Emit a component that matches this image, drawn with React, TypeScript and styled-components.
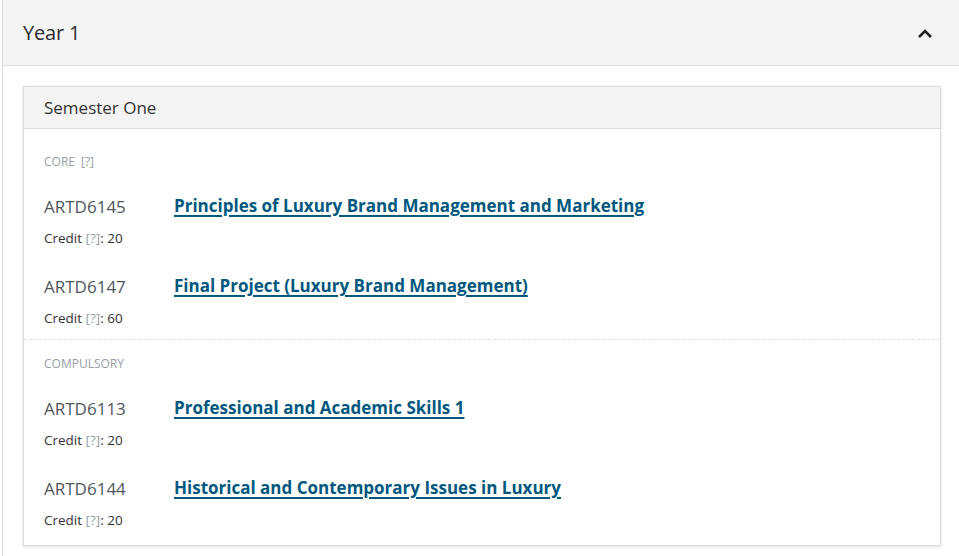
import React from "react";
import styled, { createGlobalStyle } from "styled-components";

const Global = createGlobalStyle`
  html, body { margin: 0; padding: 0; background: #fff; }
  body { font-family: "Open Sans", "Noto Sans", sans-serif; color: #333; overflow: hidden; }
`;

const Accordion = styled.section`
  margin-left: 2px;
  border-left: 1px solid #dcdcdc;
  width: 957px;
  box-sizing: border-box;
`;

const AccordionHeader = styled.header`
  height: 65px;
  background: #f4f4f4;
  border-bottom: 1px solid #dcdcdc;
  display: flex;
  align-items: center;
  justify-content: space-between;
  padding: 0 26px 0 20px;
  box-sizing: content-box;
`;

const YearTitle = styled.h2`
  margin: 0;
  font-size: 20px;
  font-weight: 500;
  color: #2b2b2b;
  letter-spacing: -0.2px;
`;

const AccordionBody = styled.div`
  padding: 20px 18px 20px 20px;
`;

const Card = styled.div`
  border: 1px solid #dcdcdc;
  box-shadow: 0 1px 3px rgba(0, 0, 0, 0.12);
  background: #fff;
`;

const CardHeader = styled.div`
  height: 41px;
  background: #f4f4f4;
  border-bottom: 1px solid #dcdcdc;
  display: flex;
  align-items: center;
  padding-left: 20px;
`;

const SemesterTitle = styled.h3`
  margin: 0;
  font-size: 17px;
  font-weight: 500;
  color: #333;
`;

const Section = styled.div<{ $first?: boolean; $last?: boolean }>`
  padding: ${(p) => (p.$first ? "24px" : "15px")} 20px ${(p) => (p.$last ? "15px" : "11px")};
  border-top: ${(p) => (p.$first ? "none" : "1px dashed #dedede")};
`;

const SectionLabel = styled.div`
  font-size: 12px;
  line-height: 18px;
  text-transform: uppercase;
  color: #969da5;
  margin-bottom: 23px;
`;

const Hint = styled.span`
  color: #969da5;
  margin-left: 6px;
`;

const Module = styled.div<{ $last?: boolean }>`
  margin-bottom: ${(p) => (p.$last ? "0" : "26px")};
`;

const ModuleRow = styled.div`
  display: flex;
  align-items: baseline;
  line-height: 26px;
`;

const Code = styled.span`
  width: 130px;
  flex-shrink: 0;
  font-size: 17px;
  font-weight: 500;
  color: #4f5760;
`;

const Title = styled.a`
  font-size: 17px;
  font-weight: 700;
  color: #00587e;
  text-decoration: underline;
  text-underline-offset: 3px;
  text-decoration-thickness: 1.5px;
  position: relative;
  top: -1px;
`;

const Credit = styled.div`
  margin-top: 8px;
  font-size: 13.5px;
  line-height: 20px;
  color: #333;
`;

const CreditHint = styled.span`
  color: #969da5;
`;

const Chevron = () => (
  <svg width="16" height="12" viewBox="0 0 16 12" aria-hidden>
    <polyline points="2,10 8,4 14,10" fill="none" stroke="#222" strokeWidth="2.6" />
  </svg>
);

type Mod = { code: string; title: string; credit: number };

const sections: { label: string; hint?: boolean; modules: Mod[] }[] = [
  {
    label: "Core",
    hint: true,
    modules: [
      { code: "ARTD6145", title: "Principles of Luxury Brand Management and Marketing", credit: 20 },
      { code: "ARTD6147", title: "Final Project (Luxury Brand Management)", credit: 60 },
    ],
  },
  {
    label: "Compulsory",
    modules: [
      { code: "ARTD6113", title: "Professional and Academic Skills 1", credit: 20 },
      { code: "ARTD6144", title: "Historical and Contemporary Issues in Luxury", credit: 20 },
    ],
  },
];

export default function App() {
  return (
    <>
      <Global />
      <Accordion>
        <AccordionHeader>
          <YearTitle>Year 1</YearTitle>
          <Chevron />
        </AccordionHeader>
        <AccordionBody>
          <Card>
            <CardHeader>
              <SemesterTitle>Semester One</SemesterTitle>
            </CardHeader>
            {sections.map((s, si) => (
              <Section key={s.label} $first={si === 0} $last={si === sections.length - 1}>
                <SectionLabel>
                  {s.label}
                  {s.hint && <Hint>[?]</Hint>}
                </SectionLabel>
                {s.modules.map((m, mi) => (
                  <Module key={m.code} $last={mi === s.modules.length - 1}>
                    <ModuleRow>
                      <Code>{m.code}</Code>
                      <Title href="#">{m.title}</Title>
                    </ModuleRow>
                    <Credit>
                      Credit <CreditHint>[?]</CreditHint>: {m.credit}
                    </Credit>
                  </Module>
                ))}
              </Section>
            ))}
          </Card>
        </AccordionBody>
      </Accordion>
    </>
  );
}
